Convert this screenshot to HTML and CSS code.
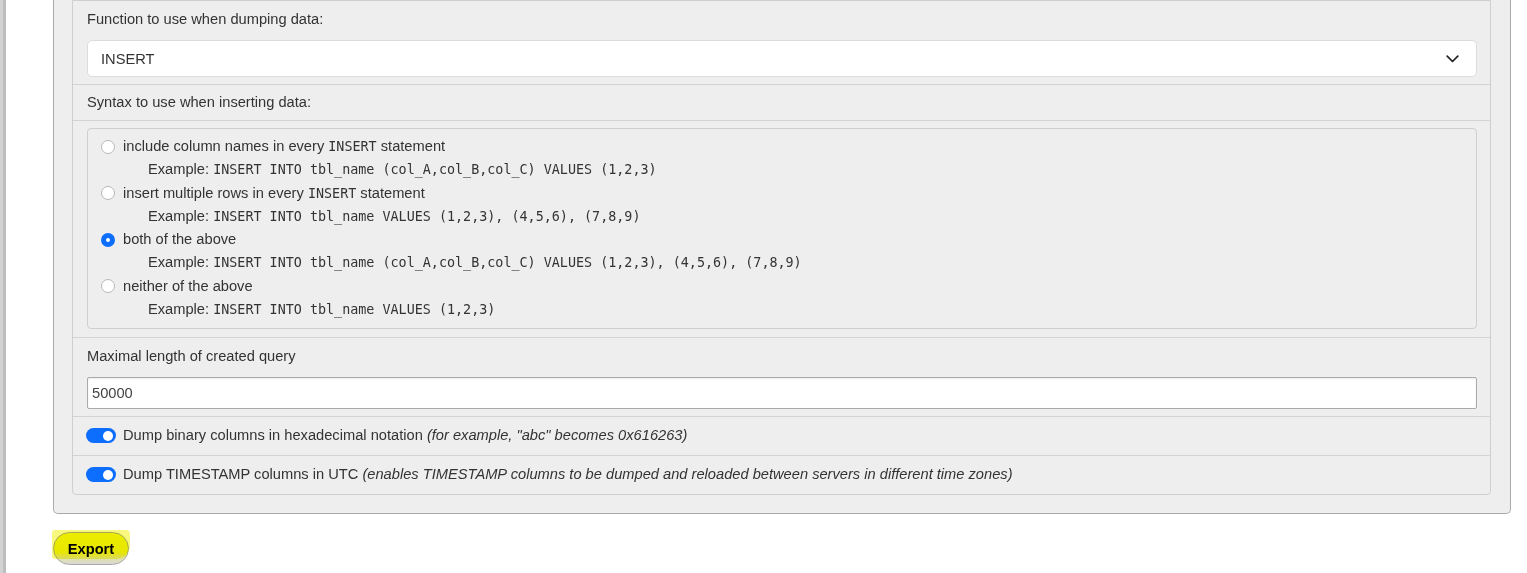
FILE: index.html
```html
<!DOCTYPE html>
<html>
<head>
<meta charset="utf-8">
<link rel="stylesheet" href="styles.css">
</head>
<body>
<div class="page">
  <div class="sidebar-edge"></div>
  <main class="main">
    <div class="fieldset">
      <ul class="opts">
        <li class="row row-first">
          <label class="lbl">Function to use when dumping data:</label>
          <div class="select">
            <span>INSERT</span>
            <svg class="chev" width="13" height="8" viewBox="0 0 13 8"><path d="M1.2 1.2 L6.5 6.5 L11.8 1.2" fill="none" stroke="#222" stroke-width="1.7" stroke-linecap="round" stroke-linejoin="round"/></svg>
          </div>
        </li>
        <li class="row row-label">
          <label class="lbl">Syntax to use when inserting data:</label>
        </li>
        <li class="row row-radios">
          <div class="radiobox">
            <div class="opt">
              <div class="opt-line"><span class="radio"></span><span>include column names in every <code>INSERT</code> statement</span></div>
              <div class="example">Example: <code>INSERT INTO tbl_name (col_A,col_B,col_C) VALUES (1,2,3)</code></div>
            </div>
            <div class="opt">
              <div class="opt-line"><span class="radio"></span><span>insert multiple rows in every <code>INSERT</code> statement</span></div>
              <div class="example">Example: <code>INSERT INTO tbl_name VALUES (1,2,3), (4,5,6), (7,8,9)</code></div>
            </div>
            <div class="opt">
              <div class="opt-line"><span class="radio checked"></span><span>both of the above</span></div>
              <div class="example">Example: <code>INSERT INTO tbl_name (col_A,col_B,col_C) VALUES (1,2,3), (4,5,6), (7,8,9)</code></div>
            </div>
            <div class="opt">
              <div class="opt-line"><span class="radio"></span><span>neither of the above</span></div>
              <div class="example">Example: <code>INSERT INTO tbl_name VALUES (1,2,3)</code></div>
            </div>
          </div>
        </li>
        <li class="row row-first">
          <label class="lbl">Maximal length of created query</label>
          <div class="textinput">50000</div>
        </li>
        <li class="row row-toggle">
          <span class="switch"><span class="knob"></span></span>
          <span>Dump binary columns in hexadecimal notation <em>(for example, "abc" becomes 0x616263)</em></span>
        </li>
        <li class="row row-toggle last">
          <span class="switch"><span class="knob"></span></span>
          <span>Dump TIMESTAMP columns in UTC <em>(enables TIMESTAMP columns to be dumped and reloaded between servers in different time zones)</em></span>
        </li>
      </ul>
    </div>
    <div class="actions">
      <button class="btn">Export</button>
    </div>
  </main>
</div>
</body>
</html>
```
FILE: styles.css
```css
html, body {
  margin: 0;
  padding: 0;
  background: #fff;
}
body {
  font-family: "Liberation Sans", Arial, sans-serif;
  font-size: 14.67px;
  color: #333;
}
.page {
  display: flex;
  min-height: 573px;
}
.sidebar-edge {
  width: 6px;
  flex: none;
  background: linear-gradient(to right, #d2d2d2 0, #d2d2d2 3px, #bdbdbd 3px, #bdbdbd 6px);
}
.main {
  flex: 1;
  padding-left: 47px;
  padding-right: 16px;
}
.fieldset {
  background: #eeeeee;
  border: 1px solid #aaa;
  border-top: none;
  border-radius: 0 0 5px 5px;
  padding: 0 19px 18px 18px;
}
.opts {
  list-style: none;
  margin: 0;
  padding: 0;
  border: 1px solid #cfcfcf;
  border-radius: 0 0 4px 4px;
  background: #eeeeee;
}
.row {
  padding: 8px 13px 7px 14px;
  border-bottom: 1px solid #d3d3d3;
}
.row.last {
  border-bottom: none;
}
.lbl {
  display: block;
  line-height: 20px;
}
.select {
  margin-top: 11px;
  height: 35px;
  background: #fff;
  border: 1px solid #dcdcdc;
  border-radius: 5px;
  display: flex;
  align-items: center;
  justify-content: space-between;
  padding: 0 17px 0 13px;
  font-size: 14.67px;
}
.chev {
  display: block;
}
.row-label {
  padding-top: 7px;
  padding-bottom: 8px;
}
.row-radios {
  padding-top: 7px;
  padding-bottom: 8px;
}
.radiobox {
  border: 1px solid #cfcfcf;
  border-radius: 4px;
  background: #eeeeee;
  padding: 6px 13px 7px 13px;
}
.opt-line, .example {
  line-height: 23.25px;
  height: 23.25px;
  white-space: nowrap;
}
.opt-line {
  display: flex;
  align-items: center;
}
.example {
  padding-left: 47px;
}
code {
  font-family: "DejaVu Sans Mono", "Liberation Mono", monospace;
  font-size: 13.4px;
  color: #333;
}
.radio {
  width: 12px;
  height: 12px;
  border: 1px solid #b8b8b8;
  border-radius: 50%;
  background: #fff;
  margin-right: 8px;
  flex: none;
  box-sizing: content-box;
}
.radio.checked {
  width: 4px;
  height: 4px;
  border: 5px solid #0d6efd;
  background: #fff;
}
.textinput {
  margin-top: 11px;
  height: 30px;
  line-height: 30px;
  background: #fff;
  border: 1px solid #aaa;
  border-radius: 2px;
  padding-left: 4px;
  box-shadow: inset 0 1px 2px rgba(0,0,0,0.08);
  color: #444;
}
.row-toggle {
  display: flex;
  align-items: center;
  line-height: 21px;
  padding-top: 8px;
  padding-bottom: 9px;
  white-space: nowrap;
}
.switch {
  width: 30px;
  height: 15px;
  border-radius: 8px;
  background: #0d6efd;
  margin-right: 7px;
  margin-left: -1px;
  flex: none;
  display: flex;
  align-items: center;
  justify-content: flex-end;
  padding-right: 3px;
  box-sizing: border-box;
}
.knob {
  width: 10px;
  height: 10px;
  border-radius: 50%;
  background: #fff;
}
em {
  font-style: italic;
}
.actions {
  margin-top: 18px;
}
.btn {
  position: relative;
  width: 76px;
  height: 33px;
  border: 1px solid #aaa;
  border-radius: 17px;
  background: linear-gradient(to bottom, #f4f400 0%, #eeee00 62%, #e4e49a 78%, #d8d8d8 100%);
  font-family: "Liberation Sans", Arial, sans-serif;
  font-weight: bold;
  font-size: 14.67px;
  color: #000;
  padding: 0;
  cursor: pointer;
}
.btn::after {
  content: "";
  position: absolute;
  left: -2px;
  top: -3px;
  width: 78px;
  height: 29px;
  border-radius: 3px 4px 14px 3px;
  background: rgba(242, 242, 0, 0.5);
  mix-blend-mode: multiply;
  pointer-events: none;
}
```
